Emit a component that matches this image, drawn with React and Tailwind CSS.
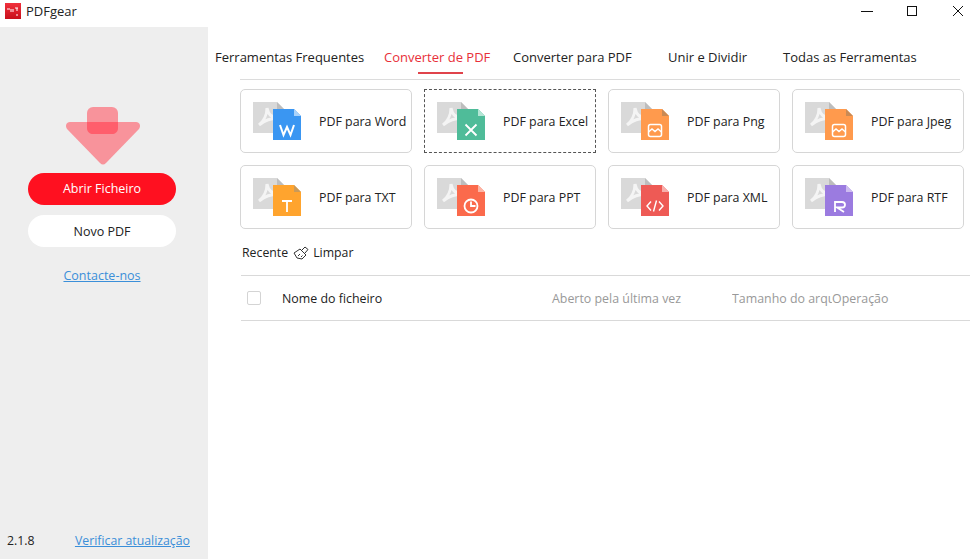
import React from 'react';

function FileIcon({ color, fold, children }) {
  return (
    <svg width="50" height="42" viewBox="0 -2 50 42" className="shrink-0">
      {/* grey pdf page behind */}
      <path d="M0 0H24L31 7V31H0Z" fill="#d9d9d9" />
      <path d="M24 0L31 7H24Z" fill="#bdbdbd" />
      <path d="M6 23C11 19 14 12 14 6C15 12 19 16 26 16C20 16 12 18 6 23Z" fill="none" stroke="#f4f4f4" strokeWidth="3" />
      {/* coloured page */}
      <path d="M20 7H41L48 14V38H20Z" fill={color} />
      <path d="M41 7L48 14H41Z" fill={fold} />
      {children}
    </svg>
  );
}

const picture = (
  <g fill="none" stroke="#fff" strokeWidth="1.500">
    <rect x="27.500" y="22.500" width="13" height="12" rx="2" />
    <path d="M27.500 30L31 27L34 29.500L37 27L40.500 30" />
  </g>
);

const tools = [
  {
    label: 'PDF para Word', color: '#3a96f2', fold: '#a9d2fa',
    glyph: <path d="M27 23L30.500 33L34 25L37.500 33L41 23" fill="none" stroke="#fff" strokeWidth="2" />,
  },
  {
    label: 'PDF para Excel', color: '#4fbc99', fold: '#b4e6d5', focused: true,
    glyph: <path d="M28.500 22.500L39.500 33.500M39.500 22.500L28.500 33.500" fill="none" stroke="#fff" strokeWidth="1.800" />,
  },
  { label: 'PDF para Png', color: '#ff9a4d', fold: '#c98a55', glyph: picture },
  { label: 'PDF para Jpeg', color: '#ff9a4d', fold: '#c98a55', glyph: picture },
  {
    label: 'PDF para TXT', color: '#ffa42e', fold: '#c99a5a',
    glyph: <path d="M29 23H39M34 23V34" fill="none" stroke="#fff" strokeWidth="1.800" />,
  },
  {
    label: 'PDF para PPT', color: '#fb6a4c', fold: '#fdb5a5',
    glyph: (
      <g fill="none" stroke="#fff" strokeWidth="1.800">
        <circle cx="34" cy="28" r="6.500" />
        <path d="M34 23.500V28H38.500" />
      </g>
    ),
  },
  {
    label: 'PDF para XML', color: '#ee5a55', fold: '#f7aeab',
    glyph: <path d="M30 23.500L26 28L30 32.500M38 23.500L42 28L38 32.500M35.500 22.500L32.500 33.500" fill="none" stroke="#fff" strokeWidth="1.400" />,
  },
  {
    label: 'PDF para RTF', color: '#9b7be0', fold: '#cdbcf0',
    glyph: <path d="M30 34V24H37C41 24 41 29.500 37 29.500H32L39 34" fill="none" stroke="#fff" strokeWidth="1.800" />,
  },
];

const tabs = ['Ferramentas Frequentes', 'Converter de PDF', 'Converter para PDF', 'Unir e Dividir', 'Todas as Ferramentas'];

export default function App() {
  return (
    <div className="w-[976px] h-[559px] bg-white flex flex-col overflow-hidden text-[13px] text-[#222] font-['Open_Sans','Noto_Sans',sans-serif]">
      {/* title bar */}
      <div className="h-[27px] flex items-start shrink-0">
        <svg width="16" height="16" viewBox="0 0 16 16" className="ml-[5px] mt-[3px] shrink-0">
          <defs>
            <linearGradient id="logo" x1="0" y1="0" x2="0" y2="1">
              <stop offset="0" stopColor="#f0303c" />
              <stop offset="1" stopColor="#c8101c" />
            </linearGradient>
          </defs>
          <rect width="16" height="16" fill="url(#logo)" />
          <path d="M2 6H5M6 6V9M8 6V9M10 5H13M12 5V8M12 11V13" stroke="#fff" strokeWidth="1" fill="none" />
        </svg>
        <span className="ml-[5px] mt-[2px] text-[13px]">PDFgear</span>
        <div className="ml-auto flex items-center">
          <svg width="46" height="27" viewBox="0 0 46 27"><path d="M13 11.500H25" stroke="#111" strokeWidth="1" /></svg>
          <svg width="46" height="27" viewBox="0 0 46 27"><rect x="13.500" y="6.500" width="9" height="9" fill="none" stroke="#111" strokeWidth="1" /></svg>
          <svg width="36" height="27" viewBox="0 0 36 27"><path d="M13 6L23 16M23 6L13 16" stroke="#111" strokeWidth="1" /></svg>
        </div>
      </div>

      <div className="flex flex-1 min-h-0">
        {/* sidebar */}
        <aside className="w-[208px] bg-[#eeeeee] flex flex-col items-center shrink-0">
          <svg width="76" height="58" viewBox="0 0 76 58" className="mt-[80px] ml-[-2px]">
            <path d="M5 15H71C75 15 76 19 74 22L41 56C39 58 37 58 35 56L2 22C0 19 1 15 5 15Z" fill="#f8939b" />
            <rect x="22" y="0" width="31" height="27" rx="6" fill="#f8939b" />
            <path d="M22 15H53V21C53 25 50 27 47 27H28C25 27 22 25 22 21Z" fill="#ff5e6c" />
          </svg>
          <button className="mt-[8px] mr-[4px] w-[148px] h-[32px] rounded-full bg-[#ff1020] text-white text-[12.5px]">Abrir Ficheiro</button>
          <button className="mt-[10px] mr-[4px] w-[148px] h-[32px] pt-[2px] rounded-full bg-white text-[12.5px]">Novo PDF</button>
          <a className="mt-[20px] mr-[4px] text-[#3b8fd9] underline text-[12.5px]">Contacte-nos</a>
          <div className="mt-auto w-full flex justify-between pl-[7px] pr-[18px] pb-[9px] text-[12.3px]">
            <span>2.1.8</span>
            <a className="text-[#3b8fd9] underline">Verificar atualização</a>
          </div>
        </aside>

        {/* main */}
        <main className="flex-1 min-w-0 flex flex-col">
          <div className="h-[53px] ml-[32px] mr-[16px] border-b border-[#dcdcdc] flex items-start shrink-0 mb-[9px]">
            <div className="flex ml-[-25px]">
              {tabs.map((t, i) => (
                <div key={t} className={`relative mt-[21px] whitespace-nowrap ${['w-[169px]', 'w-[129px]', 'w-[155px]', 'w-[115px]', ''][i]}`}>
                  <span className={i === 1 ? 'text-[#e8303a]' : ''}>{t}</span>
                  {i === 1 && <span className="absolute left-[34px] top-[24px] w-[45px] h-[2px] bg-[#e0434b]" />}
                </div>
              ))}
            </div>
          </div>

          <div className="grid grid-cols-[repeat(4,172px)] gap-x-[12px] gap-y-[12px] pl-[32px]">
            {tools.map(t => (
              <div
                key={t.label}
                className={`h-[64px] flex items-center pl-[12px] ${t.focused ? 'border border-dashed border-[#555]' : 'border border-[#d6d6d6] rounded-[5px]'}`}
              >
                <FileIcon color={t.color} fold={t.fold}>{t.glyph}</FileIcon>
                <span className="ml-[16px] mt-[2px] whitespace-nowrap text-[12.4px]">{t.label}</span>
              </div>
            ))}
          </div>

          <div className="flex items-center ml-[34px] mt-[14px] h-[20px] text-[12.3px]">
            <span>Recente</span>
            <svg width="16" height="14" viewBox="0 0 16 14" className="ml-[5px]">
              <path d="M1 7L7 3L13 9L9 13L4 12ZM5 10L7 8M8 11L9.500 9.500M9 4L12 1L15 3.500L12 7" fill="none" stroke="#333" strokeWidth="1" />
            </svg>
            <span className="ml-[4px]">Limpar</span>
          </div>

          <div className="ml-[33px] mr-[6px] mt-[12px] h-[46px] border-y border-[#d9d9d9] flex items-center text-[12.4px]">
            <span className="ml-[6px] w-[14px] h-[14px] border border-[#d4d4d4] rounded-[2px] shrink-0" />
            <span className="ml-[21px] mt-[2px] w-[270px]">Nome do ficheiro</span>
            <span className="w-[180px] mt-[2px] text-[#999]">Aberto pela última vez</span>
            <span className="w-[100px] mt-[2px] overflow-hidden whitespace-nowrap text-[#999]">Tamanho do arquivo</span>
            <span className="mt-[2px] text-[#999]">Operação</span>
          </div>
        </main>
      </div>
    </div>
  );
}
